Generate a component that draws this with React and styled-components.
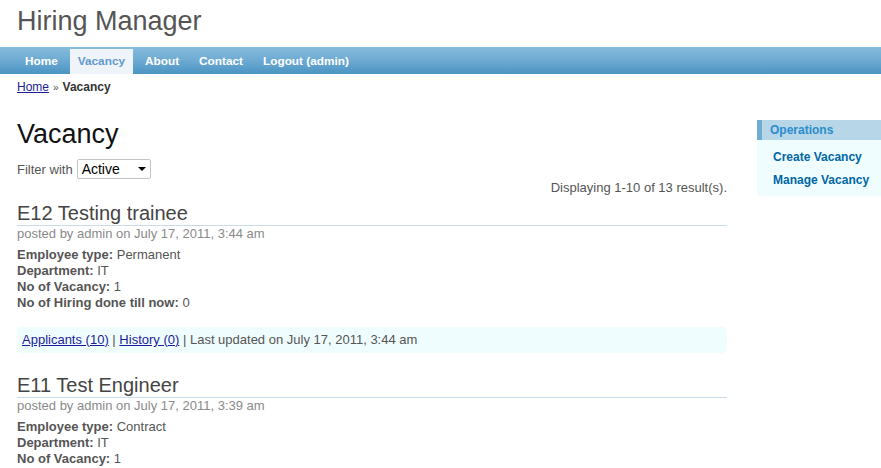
import React from "react";
import styled, { createGlobalStyle } from "styled-components";

const Global = createGlobalStyle`
  html, body { margin: 0; padding: 0; background: #fff; }
  body { font: normal 13px "Liberation Sans", Arial, sans-serif; color: #555; overflow: hidden; }
  * { box-sizing: border-box; }
`;

const Page = styled.div`
  width: 881px;
  overflow: hidden;
`;

const Header = styled.div`
  padding: 6px 17px 10px;
`;

const Logo = styled.div`
  font-size: 27px;
  line-height: 31px;
  color: #555;
`;

const MainMenu = styled.ul`
  display: flex;
  gap: 4px;
  list-style: none;
  margin: 0;
  padding: 2px 17px 0;
  height: 27px;
  background: linear-gradient(to bottom, #86bcdd 0%, #6eaad2 50%, #4a94c3 100%);
`;

const MenuItem = styled.li`
  display: block;
  height: 25px;
  padding: 0 8px;
  font-size: 11.8px;
  font-weight: bold;
  line-height: 25px;
  color: ${(p) => (p.$active ? "#6399cd" : "#ffffff")};
  background: ${(p) => (p.$active ? "#EFF4FA" : "transparent")};
`;

const Breadcrumbs = styled.div`
  padding: 5px 17px;
  font-size: 12px;
  line-height: 16px;
  color: #333;
`;

const Crumb = styled.a`
  color: #1c1c9a;
  text-decoration: underline;
`;

const Sep = styled.span`
  font-size: 10px;
  color: #555;
  margin: 0 4px;
`;

const Current = styled.span`
  font-weight: bold;
`;

const Layout = styled.div`
  display: grid;
  grid-template-columns: 710px 1fr;
  column-gap: 30px;
  padding-left: 17px;
`;

const Content = styled.div`
  padding-top: 20px;
`;

const Title = styled.h1`
  margin: 0;
  font-size: 27px;
  line-height: 27px;
  font-weight: normal;
  color: #111;
`;

const FilterRow = styled.div`
  display: flex;
  align-items: center;
  gap: 4px;
  margin-top: 11px;
  height: 20px;
  font-size: 13px;
  color: #555;
`;

const SelectBox = styled.div`
  position: relative;
  width: 74px;
  height: 20px;
  border: 1px solid #c4c4c4;
  border-radius: 2px;
  background: #fff;
  padding-left: 4px;
  font-size: 14px;
  line-height: 18px;
  color: #000;
`;

const Arrow = styled.span`
  position: absolute;
  right: 4px;
  top: 7px;
  width: 0;
  height: 0;
  border-left: 4px solid transparent;
  border-right: 4px solid transparent;
  border-top: 4px solid #000;
`;

const Summary = styled.div`
  margin-top: 1px;
  text-align: right;
  font-size: 13px;
  line-height: 16px;
  color: #555;
`;

const Item = styled.div`
  margin-top: ${(p) => (p.$first ? "6px" : "21px")};
`;

const ItemTitle = styled.h2`
  margin: 0;
  font-size: 20px;
  line-height: 23px;
  font-weight: normal;
  color: #444;
  border-bottom: 1px solid #c9dbe6;
`;

const Posted = styled.div`
  font-size: 13px;
  line-height: 15px;
  color: #8a8a8a;
`;

const Details = styled.div`
  margin-top: 6px;
  font-size: 13px;
  line-height: 16px;
  color: #555;
`;

const Label = styled.b`
  color: #555;
`;

const LinkBar = styled.div`
  margin-top: 16px;
  padding: 5px;
  background: #EFFDFF;
  border-radius: 5px;
  font-size: 13px;
  line-height: 16px;
  color: #555;
`;

const Link = styled.a`
  color: #1c1c9a;
  text-decoration: underline;
`;

const Sidebar = styled.div`
  padding-top: 19px;
`;

const PortletHead = styled.div`
  padding: 3px 8px;
  background: #B7D6E7;
  border-left: 5px solid #6FACCF;
  font-size: 12px;
  line-height: 14px;
  font-weight: bold;
  color: #298dcd;
`;

const PortletBody = styled.ul`
  list-style: none;
  margin: 0;
  padding: 6px 8px 4px;
  background: #EFFDFF;
`;

const OpItem = styled.li`
  padding: 2px 0;
`;

const OpLink = styled.a`
  display: block;
  padding: 2px 0 2px 8px;
  font: bold 12px "Liberation Sans", Arial, sans-serif;
  line-height: 15px;
  color: #0066A4;
  text-decoration: none;
`;

const vacancies = [
  {
    title: "E12 Testing trainee",
    posted: "posted by admin on July 17, 2011, 3:44 am",
    type: "Permanent",
    dept: "IT",
    count: "1",
    hired: "0",
    applicants: 10,
    history: 0,
    updated: "July 17, 2011, 3:44 am",
  },
  {
    title: "E11 Test Engineer",
    posted: "posted by admin on July 17, 2011, 3:39 am",
    type: "Contract",
    dept: "IT",
    count: "1",
    hired: "0",
    applicants: 4,
    history: 0,
    updated: "July 17, 2011, 3:39 am",
  },
];

export default function App() {
  return (
    <Page>
      <Global />
      <Header>
        <Logo>Hiring Manager</Logo>
      </Header>
      <MainMenu>
        <MenuItem>Home</MenuItem>
        <MenuItem $active>Vacancy</MenuItem>
        <MenuItem>About</MenuItem>
        <MenuItem>Contact</MenuItem>
        <MenuItem>Logout (admin)</MenuItem>
      </MainMenu>
      <Breadcrumbs>
        <Crumb href="#">Home</Crumb>
        <Sep>»</Sep>
        <Current>Vacancy</Current>
      </Breadcrumbs>
      <Layout>
        <Content>
          <Title>Vacancy</Title>
          <FilterRow>
            Filter with
            <SelectBox>
              Active
              <Arrow />
            </SelectBox>
          </FilterRow>
          <Summary>Displaying 1-10 of 13 result(s).</Summary>
          {vacancies.map((v, i) => (
            <Item key={v.title} $first={i === 0}>
              <ItemTitle>{v.title}</ItemTitle>
              <Posted>{v.posted}</Posted>
              <Details>
                <div><Label>Employee type:</Label> {v.type}</div>
                <div><Label>Department:</Label> {v.dept}</div>
                <div><Label>No of Vacancy:</Label> {v.count}</div>
                <div><Label>No of Hiring done till now:</Label> {v.hired}</div>
              </Details>
              <LinkBar>
                <Link href="#">Applicants ({v.applicants})</Link> |{" "}
                <Link href="#">History ({v.history})</Link> | Last updated on {v.updated}
              </LinkBar>
            </Item>
          ))}
        </Content>
        <Sidebar>
          <PortletHead>Operations</PortletHead>
          <PortletBody>
            <OpItem><OpLink href="#">Create Vacancy</OpLink></OpItem>
            <OpItem><OpLink href="#">Manage Vacancy</OpLink></OpItem>
          </PortletBody>
        </Sidebar>
      </Layout>
    </Page>
  );
}
